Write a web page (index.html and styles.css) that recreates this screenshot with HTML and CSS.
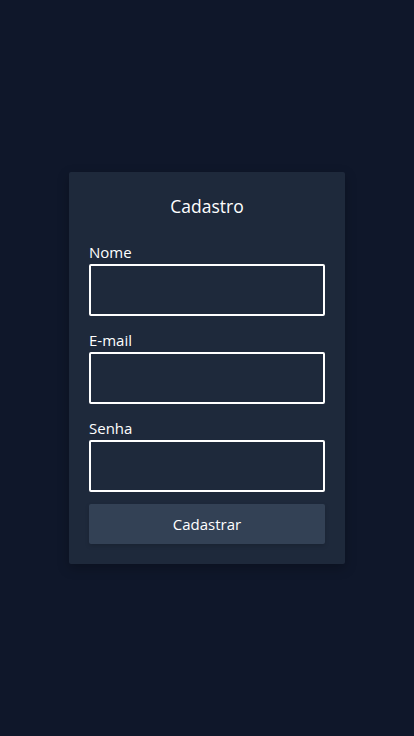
FILE: index.html
```html
<!DOCTYPE html>
<html lang="pt">
<head>
<meta charset="utf-8">
<title>Cadastro</title>
<link rel="stylesheet" href="styles.css">
</head>
<body>
<main class="page">
  <form class="card">
    <h1 class="title">Cadastro</h1>
    <label class="field">
      <span class="label">Nome</span>
      <input class="input" type="text">
    </label>
    <label class="field">
      <span class="label">E-mail</span>
      <input class="input" type="email">
    </label>
    <label class="field">
      <span class="label">Senha</span>
      <input class="input" type="password">
    </label>
    <button class="button" type="button">Cadastrar</button>
  </form>
</main>
</body>
</html>
```
FILE: styles.css
```css
* { box-sizing: border-box; }
html, body { margin: 0; padding: 0; }
body {
  background: #0f172a;
  color: #ffffff;
  font-family: "Open Sans", "Noto Sans", sans-serif;
}
.page {
  min-height: 736px;
  display: flex;
  align-items: center;
  justify-content: center;
}
.card {
  width: 276px;
  background: #1e293b;
  border-radius: 2px;
  padding: 20px;
  display: flex;
  flex-direction: column;
  gap: 12px;
  box-shadow: 0 4px 12px rgba(0,0,0,0.25);
}
.title {
  margin: 0 0 8px;
  font-size: 17.5px;
  font-weight: 400;
  line-height: 28px;
  text-align: center;
}
.field {
  display: flex;
  flex-direction: column;
}
.label {
  font-size: 15px;
  line-height: 24px;
}
.input {
  height: 52px;
  border: 2px solid #ffffff;
  border-radius: 2px;
  background: #1e293b;
  color: #fff;
  font: inherit;
  padding: 0 10px;
  outline: none;
}
.button {
  height: 40px;
  border: 0;
  border-radius: 2px;
  background: #334155;
  color: #ffffff;
  font-family: inherit;
  font-size: 15px;
  box-shadow: 0 2px 4px rgba(0,0,0,0.15);
}
```
